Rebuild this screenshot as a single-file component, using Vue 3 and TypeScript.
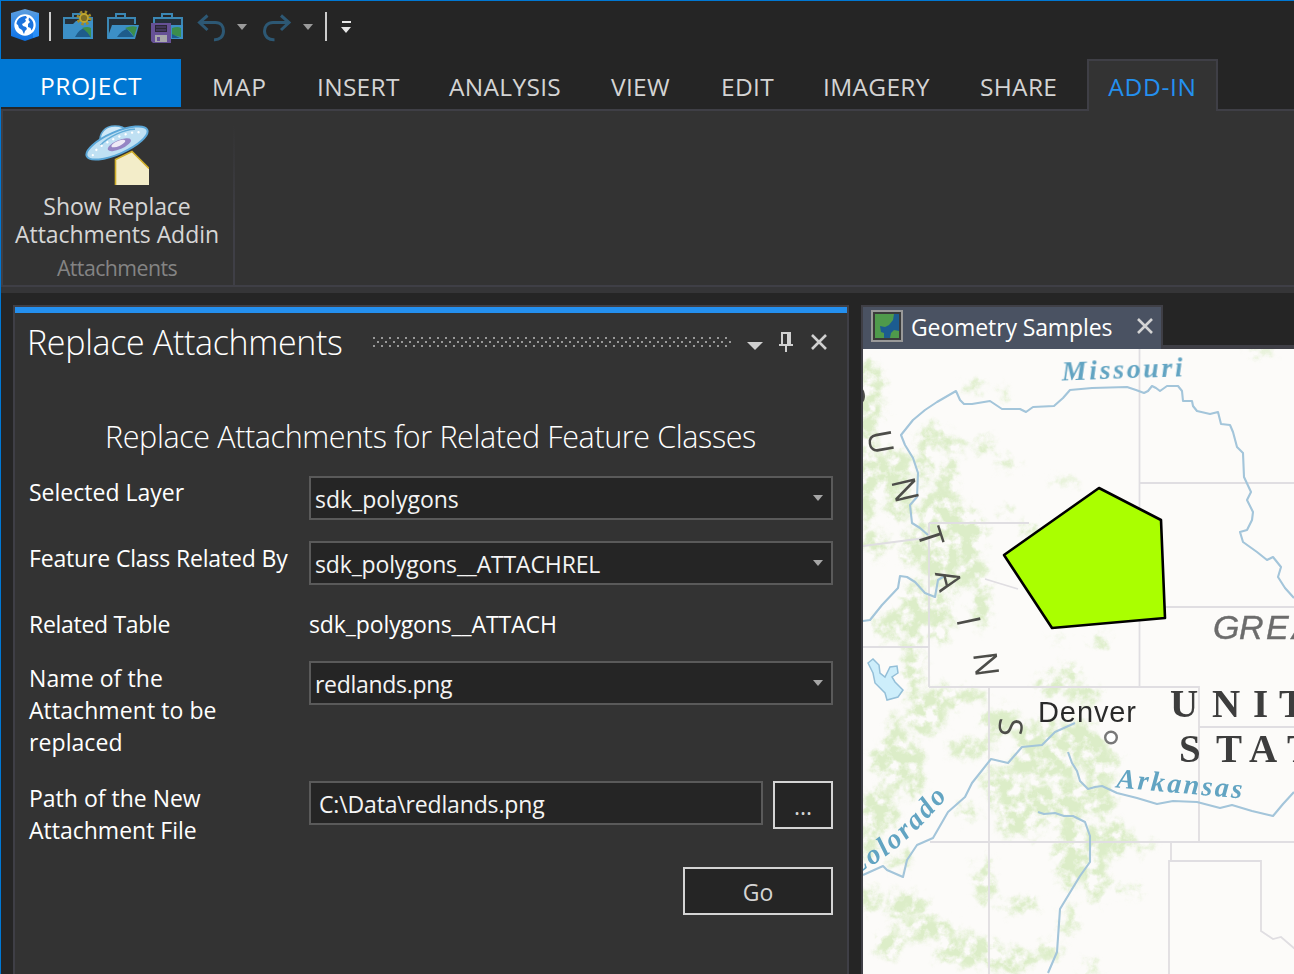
<script setup lang="ts">
interface Glyph {
  ch: string
  x: number
  y: number
  r: number
}

const tabs: { label: string; cls: string }[] = [
  { label: 'MAP', cls: 't-map' },
  { label: 'INSERT', cls: 't-insert' },
  { label: 'ANALYSIS', cls: 't-analysis' },
  { label: 'VIEW', cls: 't-view' },
  { label: 'EDIT', cls: 't-edit' },
  { label: 'IMAGERY', cls: 't-imagery' },
  { label: 'SHARE', cls: 't-share' },
]

const mountains: Glyph[] = [
  { ch: 'O', x: 853, y: 396, r: 80 },
  { ch: 'U', x: 881, y: 442, r: 80 },
  { ch: 'N', x: 905.5, y: 490, r: 77 },
  { ch: 'T', x: 931, y: 537, r: 72 },
  { ch: 'A', x: 949, y: 580, r: 76 },
  { ch: 'I', x: 969, y: 621, r: 78 },
  { ch: 'N', x: 986.5, y: 664, r: 83 },
  { ch: 'S', x: 1011, y: 727, r: 92 },
]

const woods: number[][] = [
  [868, 400, 15, 40], [866, 480, 12, 44], [893, 472, 18, 24], [935, 437, 17, 10], [950, 446, 14, 6],
  [983, 445, 12, 6], [950, 470, 7, 12], [1010, 465, 14, 5], [973, 387, 9, 5], [1004, 394, 6, 4],
  [923, 460, 6, 30], [900, 505, 14, 14], [940, 515, 30, 22], [965, 535, 20, 26], [930, 550, 30, 20],
  [955, 570, 32, 18], [915, 610, 14, 30], [940, 615, 11, 28], [982, 605, 10, 24], [890, 625, 18, 14],
  [913, 665, 9, 38], [950, 697, 38, 9], [925, 715, 22, 18], [895, 755, 12, 38], [914, 770, 10, 30],
  [880, 810, 20, 22], [965, 750, 14, 10], [985, 745, 10, 9], [1000, 722, 18, 16], [1050, 685, 15, 10],
  [1070, 674, 9, 12], [1085, 694, 16, 9], [1040, 738, 26, 18], [1075, 740, 30, 18], [1045, 765, 36, 16],
  [1100, 765, 18, 20], [1000, 785, 16, 18], [1030, 805, 34, 20], [1020, 825, 24, 12], [1070, 800, 30, 20],
  [1100, 800, 14, 16], [1070, 850, 14, 40], [1095, 865, 14, 38], [1115, 838, 16, 16], [1135, 845, 20, 5],
  [985, 880, 9, 24], [905, 905, 20, 14], [930, 930, 30, 12], [970, 952, 34, 15], [1010, 960, 30, 12],
  [1020, 905, 18, 8], [890, 945, 14, 14], [1070, 920, 6, 16], [1090, 970, 10, 7], [968, 812, 11, 7],
  [898, 862, 12, 8], [870, 840, 10, 18], [1100, 640, 7, 8], [1118, 614, 7, 4], [1030, 528, 9, 6],
  [1260, 351, 14, 3], [1130, 890, 8, 5], [870, 900, 7, 12], [1050, 950, 12, 9], [880, 760, 11, 12],
  [1008, 514, 6, 4], [1063, 482, 16, 3], [1060, 640, 8, 3], [945, 486, 10, 8], [875, 545, 12, 14],
]
</script>

<template>
  <div class="window">
    <header class="qat">
      <svg class="logo" viewBox="10 8 30 34" width="30" height="34">
        <defs>
          <linearGradient id="hex" x1="0" y1="0" x2="0" y2="1">
            <stop offset="0" stop-color="#5f9fdc" />
            <stop offset="0.5" stop-color="#3088ea" />
            <stop offset="1" stop-color="#0c6fe0" />
          </linearGradient>
        </defs>
        <path d="M25 9l14 4v23l-14 5-14-5V13z" fill="url(#hex)" />
        <path d="M39 13v23l-6 2V20z" fill="#2f97ff" opacity=".7" />
        <circle cx="25" cy="25" r="9.900" fill="#fff" stroke="#fff" stroke-width="1.600" />
        <path d="M19 18.500c2-2 5-2.800 7-2.500l1 2-2 1 1 2-2 2-2 1 1 2 3 1 1 2-2 2-1 3c-1-1-1-3-2-4l-3-2-1-3-1.500-1c0-2 1-4 2.500-5.500z" fill="#1b73dd" />
        <path d="M29 17.500c3 1.500 4.500 4.500 4.500 7.500 0 2-.8 4-2 5.500l-1-2.500-2.500-1 0-3 2-2-1.500-2z" fill="#1b73dd" />
      </svg>
      <i class="rule first"></i>
      <svg class="folder-new" viewBox="62 10 32 34" width="32" height="34">
        <path d="M64 38V18h28v20" fill="#25303a" stroke="#3b87b4" stroke-width="2" />
        <path d="M73 17v-3h9v3" fill="none" stroke="#3b87b4" stroke-width="2" />
        <path d="M63 24h10l3-3h17v18H63z" fill="#3c8fc6" />
        <path d="M75 37q4-8 10-9l6 9z" fill="#1e5c8b" />
        <path d="M82 28q6-2 9 0v10q-3-6-9-10z" fill="#3c8d4c" />
        <circle cx="84" cy="18" r="6" fill="none" stroke="#a08a2a" stroke-width="3" stroke-dasharray="2.355 2.355" />
        <circle cx="84" cy="18" r="4" fill="#7c6d25" stroke="#bfa52e" stroke-width="1.800" />
      </svg>
      <svg class="folder-open" viewBox="106 10 34 34" width="34" height="34">
        <path d="M108 38V18h27v6" fill="#25303a" stroke="#3b87b4" stroke-width="2" />
        <path d="M116 17v-3h9v3" fill="none" stroke="#3b87b4" stroke-width="2" />
        <path d="M112 25h27l-4 14h-28z" fill="#3c8fc6" />
        <path d="M117 37q5-7 10-8l7 8z" fill="#1e5c8b" />
        <path d="M125 28q7-3 12-1l-3 10q-3-6-9-9z" fill="#3c8d4c" />
      </svg>
      <svg class="folder-save" viewBox="150 10 34 34" width="34" height="34">
        <path d="M154 23v-5h28v20" fill="#25303a" stroke="#3b87b4" stroke-width="2" />
        <path d="M162 17v-3h10v3" fill="none" stroke="#3b87b4" stroke-width="2" />
        <path d="M170 25h13v14h-13z" fill="#3c8fc6" />
        <path d="M172 28q6-2 9 0v9l-9-2z" fill="#3c8d4c" />
        <path d="M172 34l8 4h-8z" fill="#1e5c8b" />
        <path d="M151 23h20v20h-18l-2-2z" fill="#665196" />
        <path d="M155 25h12v7h-12z" fill="#2b2735" />
        <path d="M156 27h10M156 30h10" stroke="#5b4a83" />
        <path d="M155 35h12v7h-12z" fill="#a8a8aa" />
        <path d="M157 37h3v4h-3z" fill="#665196" />
      </svg>
      <svg class="undo" viewBox="197 13 30 30" width="30" height="30">
        <path d="M207.500 15.500l-8 7 8 7.500M200 22.500h15.500c5.500 0 8 4 8 8.500 0 6-4 9-9.500 8.700" fill="none" stroke="#2d5874" stroke-width="3" />
      </svg>
      <svg class="drop" viewBox="0 0 10 6" width="10" height="6"><path d="M0 0h10L5 6z" fill="#9b9b9b" /></svg>
      <svg class="redo" viewBox="262 13 30 30" width="30" height="30">
        <path d="M281 15.500l8 7-8 7.500M288.500 22.500H273c-5.500 0-8.500 4-8.500 8.500 0 6 4.500 9 10 8.700" fill="none" stroke="#2d5874" stroke-width="3" />
      </svg>
      <svg class="drop second" viewBox="0 0 10 6" width="10" height="6"><path d="M0 0h10L5 6z" fill="#9b9b9b" /></svg>
      <i class="rule last"></i>
      <svg class="more" viewBox="0 0 10 12" width="10" height="12"><path d="M1 0h9v2H1zM0 6h10L5 12z" fill="#e6e6e6" /></svg>
    </header>

    <nav class="tabs">
      <span class="tab project"><b>PROJECT</b></span>
      <span v-for="t in tabs" :key="t.label" class="tab" :class="t.cls">{{ t.label }}</span>
      <span class="tab active"><b>ADD-IN</b></span>
    </nav>

    <section class="ribbon">
      <div class="group">
        <svg class="ufo" viewBox="85 123 64 62" width="64" height="62">
          <path d="M115 159.500l17-8 17 17V185h-34z" fill="#f3edc9" />
          <path d="M115.500 185v-25.500l16.500-8 17 17" fill="none" stroke="#cfae2b" stroke-width="1.600" />
          <path d="M100 143c-1-10 5-17 15-17 6 0 10 2 12 5z" fill="#d0e9f8" stroke="#63abd8" stroke-width="1.600" />
          <g transform="rotate(-23.500 117 143)">
            <ellipse cx="117" cy="143" rx="33" ry="11" fill="#bfe0f3" stroke="#5ba7d8" stroke-width="2" />
            <path d="M101 138.500c10-5 30-5 38-1" fill="none" stroke="#62add9" stroke-width="1.500" />
            <ellipse cx="118.500" cy="145.500" rx="12.500" ry="4.500" fill="#9585c4" />
            <ellipse cx="118" cy="144" rx="7.500" ry="2.600" fill="#eeeaf6" />
            <path d="M90 144.500c5-8 48-9 53-1" fill="none" stroke="#fff" stroke-width="2.300" stroke-linecap="round" stroke-dasharray="0.100 6.500" />
          </g>
        </svg>
        <div class="command">Show Replace<br />Attachments Addin</div>
        <div class="caption">Attachments</div>
      </div>
    </section>
    <div class="ribbon-foot"></div>

    <main class="workspace">
      <section class="pane">
        <div class="pane-head">
          <h1>Replace Attachments</h1>
          <svg class="grip" width="358" height="10">
            <defs>
              <pattern id="dots" width="8" height="10" patternUnits="userSpaceOnUse">
                <path d="M0 0h2v2H0zM4 4h2v2H4zM0 8h2v2H0z" fill="#999" />
              </pattern>
            </defs>
            <rect width="358" height="10" fill="url(#dots)" />
          </svg>
          <svg class="menu" viewBox="0 0 16 8" width="16" height="8"><path d="M0 0h16L8 8z" fill="#d0d0d0" /></svg>
          <svg class="pin" viewBox="0 0 14 20" width="14" height="20">
            <path d="M2 0h10v12h2v2H8v6H6v-6H0v-2h2zM4 2v10h4V2z" fill="#d0d0d0" fill-rule="evenodd" />
          </svg>
          <svg class="close" viewBox="0 0 16 16" width="16" height="16"><path d="M1 1l14 14M15 1L1 15" stroke="#d0d0d0" stroke-width="2.600" /></svg>
        </div>
        <h2>Replace Attachments for Related Feature Classes</h2>
        <div class="form">
          <div class="row r1">
            <label>Selected Layer</label>
            <div class="combo"><span>sdk_polygons</span><svg viewBox="0 0 10 6" width="10" height="6"><path d="M0 0h10L5 6z" /></svg></div>
          </div>
          <div class="row r2">
            <label class="tight">Feature Class Related By</label>
            <div class="combo"><span class="tight">sdk_polygons__ATTACHREL</span><svg viewBox="0 0 10 6" width="10" height="6"><path d="M0 0h10L5 6z" /></svg></div>
          </div>
          <div class="row r3">
            <label class="tighter">Related Table</label>
            <div class="plain">sdk_polygons__ATTACH</div>
          </div>
          <div class="row r4">
            <label class="loose">Name of the<br />Attachment to be<br />replaced</label>
            <div class="combo"><span class="tighter">redlands.png</span><svg viewBox="0 0 10 6" width="10" height="6"><path d="M0 0h10L5 6z" /></svg></div>
          </div>
          <div class="row r5">
            <label>Path of the New<br />Attachment File</label>
            <div class="combo path"><span class="tight">C:\Data\redlands.png</span></div>
            <button class="browse">...</button>
          </div>
          <button class="go">Go</button>
        </div>
      </section>

      <section class="view">
        <div class="view-tabs">
          <div class="view-tab">
            <svg class="map-icon" viewBox="0 0 32 32" width="32" height="32">
              <path d="M0 0h32v32H0z" fill="#999" />
              <path d="M2 2h28v28H2z" fill="#3a3a3a" />
              <path d="M4 4h24v24H4z" fill="#1c5c90" />
              <path d="M4 4h19l-1 6-4 5-4 2-5-1 1 6 3 1v5H4z" fill="#4f9a4b" />
              <path d="M28 21v7h-9l1-5 3-3z" fill="#4f9a4b" />
            </svg>
            <span>Geometry Samples</span>
            <svg class="close" viewBox="0 0 16 16" width="16" height="16"><path d="M1 1l14 14M15 1L1 15" stroke="#d4d4d4" stroke-width="2.600" /></svg>
          </div>
        </div>
        <svg class="map" viewBox="863 349 431 625" width="431" height="625">
          <defs>
            <filter id="veg" x="823" y="309" width="511" height="705" filterUnits="userSpaceOnUse" color-interpolation-filters="sRGB">
              <feTurbulence type="fractalNoise" baseFrequency="0.080" numOctaves="4" seed="8" result="n" />
              <feGaussianBlur in="SourceGraphic" stdDeviation="3" result="b" />
              <feDisplacementMap in="b" in2="n" scale="24" xChannelSelector="R" yChannelSelector="G" result="d" />
              <feColorMatrix in="n" values="0 0 0 0 0  0 0 0 0 0  0 0 0 0 0  0 0 4 0 -1.250" result="m" />
              <feComposite in="d" in2="m" operator="in" />
              <feGaussianBlur stdDeviation="0.700" />
            </filter>
            <filter id="soft" x="-10%" y="-30%" width="120%" height="160%"><feGaussianBlur stdDeviation="0.650" /></filter>
            <path id="coloradoPath" d="M853 876Q905 851 956 786" />
          </defs>
          <path d="M863 349h431v625H863z" fill="#fcfbf9" />
          <g filter="url(#veg)" fill="#dcedc8">
            <ellipse v-for="(w, i) in woods" :key="i" :cx="w[0]" :cy="w[1]" :rx="w[2]" :ry="w[3]" />
          </g>
          <g filter="url(#soft)">
            <path
              d="M1139.500 349v338M1139 483h155M929 523h100M929 523v164M863 647h66M929 687h270v155M1199 727h95M1140 607h154M930 842h364M989 687v287M1171 842v19M1169 974V861h92v70l12 8 8-2 14 12M863 546l62-8M985 579l33 10"
              fill="none" stroke="#e0dee2" stroke-width="1.800"
            />
            <g fill="none" stroke="#a3c5da" stroke-width="2.100" stroke-linejoin="round">
              <path d="M928 535L920 528 912 523 910 505 917 497 918 473 913 458 905 445 901 435 913 420 925 410 937 402 956 391 960 400 964 404 972 404 990 401 1002 409 1020 409 1026 412 1033 407 1054 406 1063 398 1070 390 1092 388 1127 387 1136 390 1144 393 1148 391 1152 386 1156 388 1160 391 1167 386 1178 386 1182 391 1183 401 1192 401 1193 406 1197 411 1210 414 1218 412 1221 424 1230 425 1233 432 1237 447 1243 453 1244 477 1251 492 1247 500 1253 512 1252 520 1247 530 1240 532 1243 542 1257 552 1267 560 1273 557 1281 567 1278 577 1285 588 1294 598" />
              <path d="M863 621l7-1 12-15 16-17 2-12 7 1 8 5 10 11 10 4 3-17 8-5" />
              <path d="M863 875l20-9 4 4 16 7 4-17 10-15 16-7 15-26 17-15 7-14 19-24 17 4 14-16 20-2 13-13 20-9" />
              <path d="M1068 752l4 11 5 8 3 10 8 8 7-2 7-1 15 7 20 5 20 6 16-3 24 1 23 6 12-3 20 6 21 5 10-12 11-12" />
              <path d="M1038 812l6 2 11-1 9 3h9l12 6 5 14v26l-10 14-20 33-3 43-9 21" />
            </g>
            <path d="M868 663l5-4 6 6 1 8 5 4 5-10 7-1 1 7-6 4 3 5 8 8-5 7-11 3-2-7-10-10-2-10z" fill="#cdeefb" stroke="#94bfd8" stroke-width="1.500" />
          </g>
          <g filter="url(#soft)">
            <text
              v-for="(g, i) in mountains" :key="i" class="mountain" text-anchor="middle"
              :transform="`translate(${g.x} ${g.y}) rotate(${g.r})`" dy="12"
            >{{ g.ch }}</text>
            <text class="river" transform="translate(1062 380.500) rotate(-2)" textLength="121">Missouri</text>
            <text class="river" transform="translate(1116 787.500) rotate(5)" textLength="126">Arkansas</text>
            <text class="river"><textPath href="#coloradoPath" textLength="124">Colorado</textPath></text>
            <text class="great" y="638.500" x="1213 1239 1266 1292">GREA</text>
            <text class="country" y="717" x="1170 1212 1253 1279">UNIT</text>
            <text class="country" y="762" x="1179 1216 1249 1287">STAT</text>
            <text class="city" x="1038" y="722" textLength="98">Denver</text>
            <circle cx="1111" cy="737.500" r="5.800" fill="#fff" stroke="#777" stroke-width="2.400" />
          </g>
          <path d="M1099 488l62 32 4 98-113 10-48-73z" fill="#aaff00" stroke="#000" stroke-width="2.600" stroke-linejoin="round" />
        </svg>
      </section>
    </main>
  </div>
</template>

<style>
body {
  background: #252525;
}
</style>

<style scoped>
.window {
  box-sizing: border-box;
  width: 1294px;
  height: 974px;
  overflow: hidden;
  display: flex;
  flex-direction: column;
  background: #252525;
  border-top: 1px solid #0078d4;
  border-left: 1px solid #0078d4;
  font-family: "Open Sans", "Noto Sans", sans-serif;
  font-size: 23px;
  color: #fff;
}
svg {
  display: block;
  flex: none;
}
.qat {
  display: flex;
  align-items: flex-start;
  height: 58px;
  flex: none;
}
.logo { margin: 7px 0 0 9px; }
.rule { width: 2px; height: 29px; background: #ccc; }
.rule.first { margin: 11px 0 0 9px; }
.folder-new { margin: 9px 0 0 11px; }
.folder-open { margin: 9px 0 0 12px; }
.folder-save { margin: 9px 0 0 10px; }
.undo { margin: 12px 0 0 13px; }
.drop { margin: 23px 0 0 10px; }
.redo { margin: 12px 0 0 15px; }
.drop.second { margin-left: 11px; }
.rule.last { margin: 11px 0 0 12px; }
.more { margin: 20px 0 0 14px; }

.tabs {
  display: flex;
  height: 50px;
  flex: none;
  border-bottom: 2px solid #3f3f46;
  color: #d4d4d4;
  font-size: 24.500px;
  letter-spacing: 0.300px;
  line-height: 55px;
  white-space: nowrap;
}
.tab b { font-weight: 400; }
.tab.project {
  width: 180px;
  height: 48px;
  line-height: 53px;
  margin-right: 31px;
  text-align: center;
  letter-spacing: 0.600px;
  background: #0078d4;
  color: #fff;
}
.t-map { width: 105px; letter-spacing: 0.900px; }
.t-insert { width: 132px; }
.t-analysis { width: 162px; }
.t-view { width: 110px; }
.t-edit { width: 102px; }
.t-imagery { width: 157px; }
.t-share { width: 107px; }
.tab.active {
  box-sizing: border-box;
  width: 131px;
  height: 52px;
  line-height: 51px;
  border: 2px solid #3f3f46;
  border-bottom: 0;
  background: #333;
  color: #2490ef;
  letter-spacing: 0.700px;
  text-align: center;
}

.ribbon {
  height: 174px;
  flex: none;
  background: #333;
  border-left: 2px solid #3f3f46;
  border-bottom: 2px solid #3f3f46;
}
.group {
  box-sizing: border-box;
  width: 232px;
  height: 174px;
  padding: 12px 2px 0 0;
  display: flex;
  flex-direction: column;
  align-items: center;
  text-align: center;
  border-right: 2px solid;
  border-image: linear-gradient(#333 8%, #3f3f46 70%) 1;
}
.command {
  margin-top: 7px;
  line-height: 28px;
  letter-spacing: -0.060px;
  color: #d6d6d6;
  white-space: nowrap;
}
.caption {
  margin-top: 6px;
  line-height: 28px;
  font-size: 21.300px;
  letter-spacing: -0.550px;
  color: #848484;
}
.ribbon-foot {
  height: 6px;
  flex: none;
  background: #353537;
}

.workspace {
  display: flex;
  flex: 1;
  padding: 12px 0 0 12px;
  min-height: 0;
}
.pane {
  box-sizing: border-box;
  width: 836px;
  margin-right: 12px;
  background: #333;
  border: 2px solid #3f3f46;
  border-bottom: 0;
}
.pane-head {
  display: flex;
  align-items: flex-start;
  height: 99px;
  border-top: 6px solid #2490ef;
}
h1, h2 {
  margin: 0;
  font-weight: 300;
  white-space: nowrap;
}
h1 {
  width: 358px;
  padding-left: 12px;
  box-sizing: border-box;
  font-size: 34px;
  letter-spacing: -0.330px;
  line-height: 58px;
}
.grip { margin-top: 24px; }
.menu { margin: 29px 0 0 16px; }
.pin { margin: 19px 0 0 16px; }
.pane-head .close { margin: 21px 0 0 18px; }
h2 {
  padding-left: 90px;
  font-size: 30.500px;
  letter-spacing: -0.380px;
  line-height: 49px;
  height: 64px;
}
.form {
  width: 804px;
  margin-left: 14px;
}
.row {
  display: flex;
  align-items: flex-start;
}
.row label {
  width: 280px;
  padding-top: 1px;
  line-height: 32px;
  white-space: nowrap;
}
.row .tight { letter-spacing: -0.160px; }
.row .tighter { letter-spacing: -0.300px; }
.row .loose { letter-spacing: 0.080px; }
.r1 { height: 65px; }
.r1 label { padding-top: 0; }
.r2 { height: 66px; }
.r3 { height: 54px; }
.r4 { height: 120px; }
.r5 { height: 86px; }
.plain { padding-top: 1px; line-height: 32px; letter-spacing: -0.100px; }
.combo {
  box-sizing: border-box;
  width: 524px;
  height: 44px;
  display: flex;
  align-items: center;
  justify-content: space-between;
  padding: 2px 8px 0 4px;
  background: #252525;
  border: 2px solid #5a5a5a;
  color: #f4f4f4;
}
.combo svg { margin-bottom: 2px; fill: #a6a6a6; }
.combo.path { width: 454px; padding-left: 8px; }
button {
  box-sizing: border-box;
  display: block;
  height: 48px;
  padding: 2px 0 0;
  background: #252525;
  border: 2px solid #d4d4d4;
  color: #d4d4d4;
  font: inherit;
}
.browse { width: 60px; margin-left: 10px; }
.go { width: 150px; margin-left: auto; }

.view {
  flex: 1;
  min-width: 0;
  overflow: hidden;
  border-left: 2px solid #3f3f46;
}
.view-tabs {
  height: 44px;
  box-sizing: border-box;
  background: linear-gradient(#252525 40px, #3f3f46 40px);
}
.view-tab {
  box-sizing: border-box;
  width: 300px;
  height: 44px;
  display: flex;
  align-items: flex-start;
  border-top: 2px solid #3f3f46;
  border-right: 2px solid #3f3f46;
  background: #4a5262;
  white-space: nowrap;
}
.map-icon { margin: 3px 0 0 8px; }
.view-tab span {
  width: 226px;
  padding-left: 8px;
  box-sizing: border-box;
  line-height: 41px;
  letter-spacing: -0.120px;
}
.view-tab .close { margin: 11px 0 0 8px; }
.mountain { font: 33px "Open Sans", sans-serif; fill: #4d4d4a; }
.river { font: italic 700 28px "Liberation Serif", serif; fill: #62a4c2; }
.great { font: italic 34px "Liberation Sans", sans-serif; fill: #6c6c6c; stroke: #6c6c6c; stroke-width: 0.400px; }
.country { font: 700 39px "Liberation Serif", serif; fill: #3e3e3e; }
.city { font: 29px "Liberation Sans", sans-serif; fill: #2c2c2c; }
</style>
